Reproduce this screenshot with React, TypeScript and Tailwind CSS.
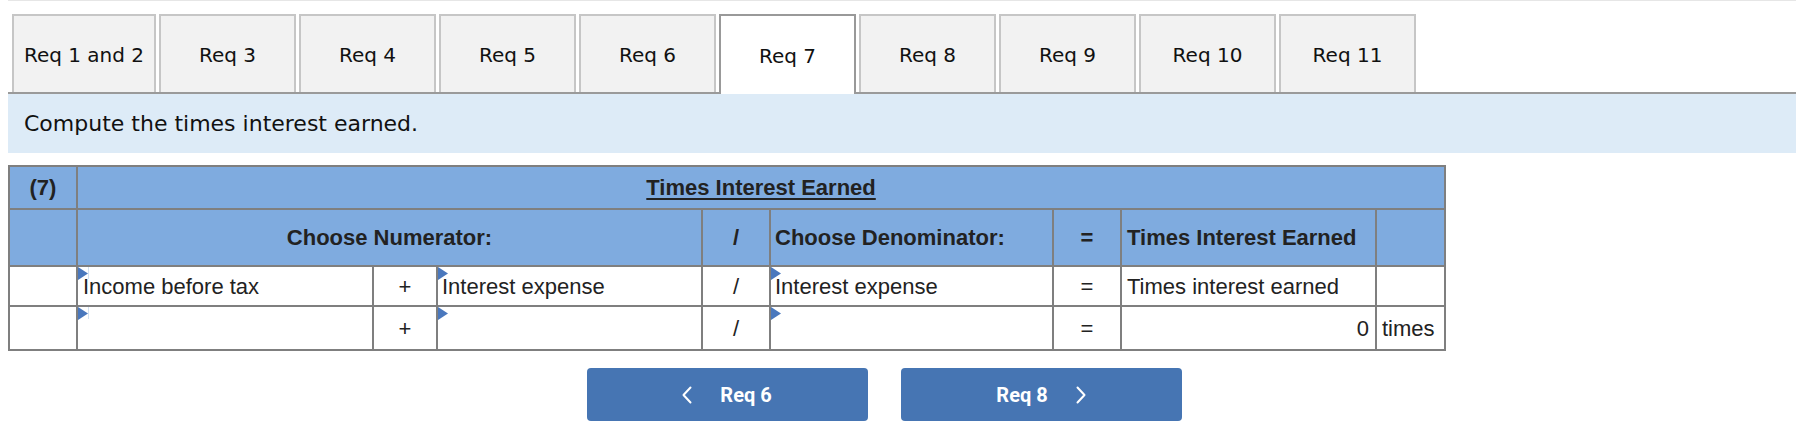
import React from "react";

const tabs = ["Req 1 and 2", "Req 3", "Req 4", "Req 5", "Req 6", "Req 7", "Req 8", "Req 9", "Req 10", "Req 11"];

function Tri({ line = false }: { line?: boolean }) {
  return (
    <>
      <svg className="absolute left-0 top-0" width="10" height="13" viewBox="0 0 10 13">
        <polygon points="0,0 10,6.5 0,13" fill="#4a78bd" />
      </svg>
      {line && <span className="absolute left-[10px] top-0 h-[12px] w-px bg-[#d3e2f1]" />}
    </>
  );
}

const bd = "border-2 border-[#7f7f7f]";

export default function App() {
  return (
    <div className="min-h-[434px] bg-white">
      <div className="ml-2 mr-3 border-t border-[#e6e6e6]">
        {/* Tabs */}
        <div className="flex items-end gap-[3px] border-b-2 border-[#9a9a9a] pl-[4px] pt-[13px] font-['DejaVu_Sans',Verdana,sans-serif] text-[20px] text-[#111]">
          {tabs.map((t, i) =>
            t === "Req 7" ? (
              <div
                key={t}
                className="-mb-[2px] flex h-[80px] w-[137px] items-center justify-center border-2 border-b-0 border-[#999999] bg-white pt-[2px]"
              >
                {t}
              </div>
            ) : (
              <div
                key={t}
                className={`flex h-[78px] items-center justify-center border-2 border-b-0 border-[#c6c6c6] bg-[#f2f2f2] pt-[2px] ${
                  i === 0 ? "w-[144px]" : "w-[137px]"
                }`}
              >
                {t}
              </div>
            )
          )}
        </div>
        {/* Instruction band */}
        <div className="flex h-[59px] items-center bg-[#ddebf7] pl-4 font-['DejaVu_Sans',Verdana,sans-serif] text-[22px] text-[#111]">
          Compute the times interest earned.
        </div>

        {/* Table */}
        <div className="mt-[12px]">
          <table className="table-fixed border-collapse font-['Liberation_Sans',Arial,sans-serif] text-[22px] text-[#222]" style={{ width: 1436 }}>
            <colgroup>
              <col style={{ width: 68 }} />
              <col style={{ width: 296 }} />
              <col style={{ width: 64 }} />
              <col style={{ width: 265 }} />
              <col style={{ width: 68 }} />
              <col style={{ width: 283 }} />
              <col style={{ width: 68 }} />
              <col style={{ width: 255 }} />
              <col style={{ width: 69 }} />
            </colgroup>
            <tbody>
              <tr className="h-[43px] bg-[#7fabdf] font-bold">
                <td className={`${bd} text-center`}>(7)</td>
                <td className={`${bd} text-center`} colSpan={8}>
                  <span className="underline decoration-2 underline-offset-[3px]">Times Interest Earned</span>
                </td>
              </tr>
              <tr className="h-[57px] bg-[#7fabdf] font-bold">
                <td className={bd}></td>
                <td className={`${bd} text-center`} colSpan={3}>
                  Choose Numerator:
                </td>
                <td className={`${bd} text-center`}>/</td>
                <td className={`${bd} pl-[4px] text-left`}>Choose Denominator:</td>
                <td className={`${bd} text-center`}>=</td>
                <td className={`${bd} pl-[5px] text-left`}>Times Interest Earned</td>
                <td className={bd}></td>
              </tr>
              <tr className="h-[40px]">
                <td className={bd}></td>
                <td className={`${bd} relative pl-[5px]`}>
                  <Tri line />
                  Income before tax
                </td>
                <td className={`${bd} text-center`}>+</td>
                <td className={`${bd} relative pl-[4px]`}>
                  <Tri />
                  Interest expense
                </td>
                <td className={`${bd} text-center`}>/</td>
                <td className={`${bd} relative pl-[4px]`}>
                  <Tri />
                  Interest expense
                </td>
                <td className={`${bd} text-center`}>=</td>
                <td className={`${bd} pl-[5px]`}>Times interest earned</td>
                <td className={bd}></td>
              </tr>
              <tr className="h-[44px]">
                <td className={bd}></td>
                <td className={`${bd} relative`}>
                  <Tri line />
                </td>
                <td className={`${bd} text-center`}>+</td>
                <td className={`${bd} relative`}>
                  <Tri />
                </td>
                <td className={`${bd} text-center`}>/</td>
                <td className={`${bd} relative`}>
                  <Tri />
                </td>
                <td className={`${bd} text-center`}>=</td>
                <td className={`${bd} pr-[6px] text-right`}>0</td>
                <td className={`${bd} pl-[5px]`}>times</td>
              </tr>
            </tbody>
          </table>
        </div>
      </div>

      {/* Nav buttons */}
      <div className="mt-[17px] flex w-[1768px] justify-center gap-[33px] font-['Roboto',sans-serif] text-[20px] font-bold text-white">
        <button className="flex h-[53px] w-[281px] items-center justify-center gap-[28px] rounded-[4px] bg-[#4675b3]">
          <svg width="10" height="18" viewBox="0 0 10 18" fill="none">
            <polyline points="8.5,1.5 1.5,9 8.5,16.5" stroke="white" strokeWidth="2" strokeLinecap="round" strokeLinejoin="round" />
          </svg>
          <span>Req 6</span>
        </button>
        <button className="flex h-[53px] w-[281px] items-center justify-center gap-[28px] rounded-[4px] bg-[#4675b3]">
          <span>Req 8</span>
          <svg width="10" height="18" viewBox="0 0 10 18" fill="none">
            <polyline points="1.5,1.5 8.5,9 1.5,16.5" stroke="white" strokeWidth="2" strokeLinecap="round" strokeLinejoin="round" />
          </svg>
        </button>
      </div>
    </div>
  );
}
